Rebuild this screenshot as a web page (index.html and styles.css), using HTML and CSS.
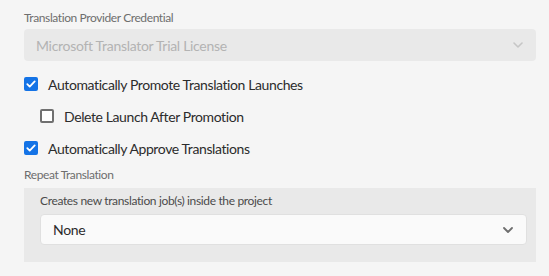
FILE: index.html
```html
<!DOCTYPE html>
<html>
<head>
	<title>Translation settings</title>
	<link rel="stylesheet" href="styles.css">
</head>
<body>
<div class="panel">
	<div class="field">
		<label class="label">Translation Provider Credential</label>
		<div class="select disabled">
			<span class="value">Microsoft Translator Trial License</span>
			<svg class="chev" width="10" height="6" viewBox="0 0 10 6"><path d="M1 1l4 4 4-4" fill="none" stroke="currentColor" stroke-width="1.6" stroke-linecap="round" stroke-linejoin="round"/></svg>
		</div>
	</div>
	<label class="check">
		<span class="box on"><svg width="10" height="8" viewBox="0 0 10 8"><path d="M1.3 4.2l2.4 2.4 5-5.2" fill="none" stroke="#fff" stroke-width="1.8" stroke-linecap="round" stroke-linejoin="round"/></svg></span>
		<span class="text">Automatically Promote Translation Launches</span>
	</label>
	<label class="check sub">
		<span class="box"></span>
		<span class="text">Delete Launch After Promotion</span>
	</label>
	<label class="check">
		<span class="box on"><svg width="10" height="8" viewBox="0 0 10 8"><path d="M1.3 4.2l2.4 2.4 5-5.2" fill="none" stroke="#fff" stroke-width="1.8" stroke-linecap="round" stroke-linejoin="round"/></svg></span>
		<span class="text">Automatically Approve Translations</span>
	</label>
	<div class="field repeat">
		<label class="label">Repeat Translation</label>
		<div class="group">
			<div class="hint">Creates new translation job(s) inside the project</div>
			<div class="select">
				<span class="value">None</span>
				<svg class="chev" width="10" height="6" viewBox="0 0 10 6"><path d="M1 1l4 4 4-4" fill="none" stroke="currentColor" stroke-width="1.8" stroke-linecap="round" stroke-linejoin="round"/></svg>
			</div>
		</div>
	</div>
</div>
</body>
</html>
```
FILE: styles.css
```css
*{margin: 0;padding: 0;box-sizing: border-box;}
body{background: #f5f5f5;font-family: "Lato", "Liberation Sans", sans-serif;color: #2c2c2c;}
.panel{width: 549px;height: 276px;padding: 11px 13px 0 24px;}
.label{display: block;font-size: 12px;letter-spacing: -0.4px;color: #6e6e6e;line-height: 14px;margin-bottom: 4px;}
.select{height: 32px;border-radius: 4px;display: flex;align-items: center;justify-content: space-between;padding: 0 13px 0 12px;font-size: 14px;letter-spacing: -0.3px;}
.select.disabled{background: #e9e9e9;color: #b3b3b3;}
.select.disabled .chev{color: #c6c6c6;}
.chev{color: #6e6e6e;}
.check{display: flex;align-items: center;height: 32px;font-size: 14px;letter-spacing: -0.4px;}
.check:first-of-type{margin-top: 7px;}
.check.sub{padding-left: 16px;}
.box{width: 14px;height: 14px;border: 2px solid #707070;border-radius: 2px;margin-right: 10px;display: flex;align-items: center;justify-content: center;background: #fff;}
.box.on{background: #1473e6;border-color: #1473e6;}
.repeat{margin-top: 4px;}
.repeat .label{margin-bottom: 6px;}
.group{background: #e9e9e9;padding: 6px 9px 17px 16px;}
.hint{font-size: 12px;letter-spacing: -0.35px;color: #4b4b4b;line-height: 14px;margin-bottom: 6px;}
.group .select{background: #fafafa;border: 1px solid #e0e0e0;height: 31px;}
```
